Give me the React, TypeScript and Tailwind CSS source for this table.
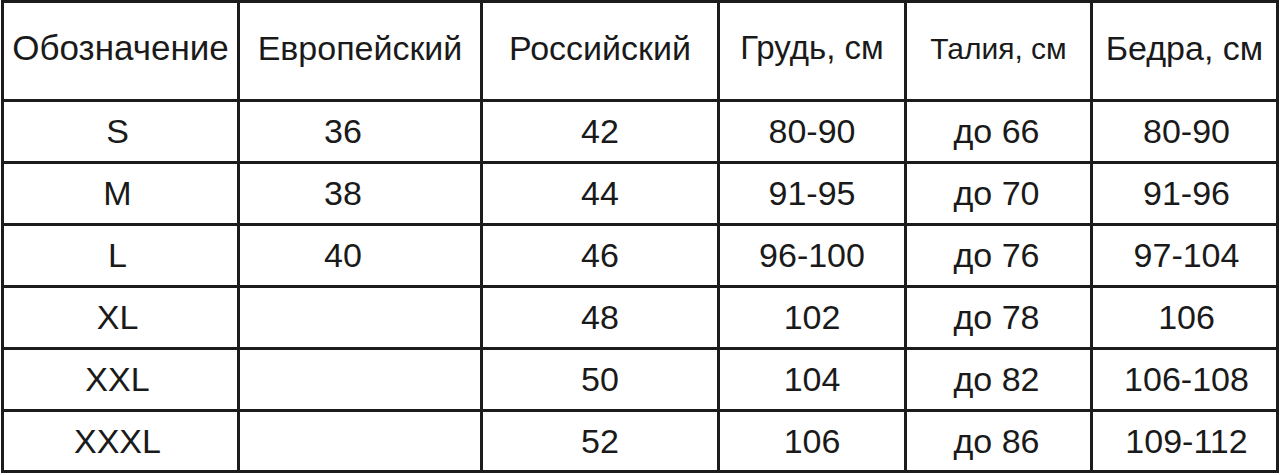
const headers = [
  { label: "Обозначение", cls: "text-[35px]" },
  { label: "Европейский", cls: "text-[34px]" },
  { label: "Российский", cls: "text-[34px]" },
  { label: "Грудь, см", cls: "text-[33px]" },
  { label: "Талия, см", cls: "text-[30px]" },
  { label: "Бедра, см", cls: "text-[34px]" },
];

const rows = [
  ["S", "36", "42", "80-90", "до 66", "80-90"],
  ["M", "38", "44", "91-95", "до 70", "91-96"],
  ["L", "40", "46", "96-100", "до 76", "97-104"],
  ["XL", "", "48", "102", "до 78", "106"],
  ["XXL", "", "50", "104", "до 82", "106-108"],
  ["XXXL", "", "52", "106", "до 86", "109-112"],
];

// per-column nudges, the source image isn't perfectly centred
const bodyNudge = ["pr-[6px]", "pr-[34px]", "", "", "pr-[4px]", "pl-[4px]"];

const cell = "flex items-center justify-center border-r-[3px] border-b-[3px] border-[#1c1c1c]";

export default function App() {
  return (
    <div className="min-h-[475px] bg-white pl-px" style={{ fontFamily: '"Liberation Sans", Arial, sans-serif' }}>
      <div className="grid w-fit grid-cols-[236px_243px_237px_187px_186px_186px] border-l-[3px] border-t-[3px] border-[#1c1c1c] text-[#1a1a1a]">
        {headers.map((h) => (
          <div key={h.label} className={`${cell} h-[99px] pb-[6px] ${h.cls}`}>
            {h.label}
          </div>
        ))}
        {rows.map((row, ri) =>
          row.map((v, ci) => (
            <div
              key={`${ri}-${ci}`}
              className={`${cell} ${ri === rows.length - 1 ? "h-[61px]" : "h-[62px]"} text-[34px] ${bodyNudge[ci]}`}
            >
              {v}
            </div>
          ))
        )}
      </div>
    </div>
  );
}
